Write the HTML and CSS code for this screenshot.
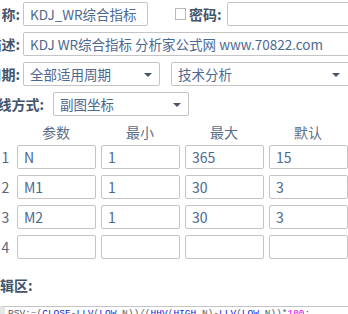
FILE: index.html
```html
<!DOCTYPE html>
<html lang="zh-CN">
<head>
  <meta charset="UTF-8">
  <title>公式编辑</title>
  <link rel="stylesheet" href="styles.css">
</head>
<body>
  <div class="form">
    <div class="row">
      <label class="label">名称:</label>
      <div class="field name">KDJ_WR综合指标</div>
      <span class="check"></span>
      <label class="label-inline">密码:</label>
      <div class="field pass"></div>
    </div>
    <div class="row">
      <label class="label">描述:</label>
      <div class="field desc">KDJ WR综合指标 分析家公式网 www.70822.com</div>
    </div>
    <div class="row">
      <label class="label">周期:</label>
      <div class="field select period">全部适用周期<span class="arrow"></span></div>
      <div class="field select kind">技术分析<span class="arrow"></span></div>
    </div>
    <div class="row">
      <label class="label wide">画线方式:</label>
      <div class="field select axis">副图坐标<span class="arrow"></span></div>
    </div>
  </div>

  <div class="params">
    <span></span>
    <span class="head">参数</span>
    <span class="head">最小</span>
    <span class="head">最大</span>
    <span class="head">默认</span>

    <span class="num">1</span>
    <div class="field">N</div>
    <div class="field">1</div>
    <div class="field">365</div>
    <div class="field">15</div>

    <span class="num">2</span>
    <div class="field">M1</div>
    <div class="field">1</div>
    <div class="field">30</div>
    <div class="field">3</div>

    <span class="num">3</span>
    <div class="field">M2</div>
    <div class="field">1</div>
    <div class="field">30</div>
    <div class="field">3</div>

    <span class="num">4</span>
    <div class="field"></div>
    <div class="field"></div>
    <div class="field"></div>
    <div class="field"></div>
  </div>

  <div class="editor-label">编辑区:</div>
  <div class="code">
    <div class="line"><span class="p">RSV:=(</span><span class="k">CLOSE</span><span class="p">-</span><span class="k">LLV</span><span class="p">(</span><span class="k">LOW</span><span class="p">,N))/(</span><span class="k">HHV</span><span class="p">(</span><span class="k">HIGH</span><span class="p">,N)-</span><span class="k">LLV</span><span class="p">(</span><span class="k">LOW</span><span class="p">,N))*</span><span class="n">100</span><span class="p">;</span></div>
  </div>
</body>
</html>
```

FILE: styles.css
```css
* {
  box-sizing: border-box;
}

body {
  margin: 0;
  width: 348px;
  height: 314px;
  overflow: hidden;
  background: #ffffff;
  font-family: "Noto Sans CJK SC", "Noto Sans", sans-serif;
  font-size: 13.5px;
  color: #46566b;
}

/* Top form */
.form {
  margin-left: -30px;
  padding-top: 2px;
  width: 420px;
}

.row {
  display: flex;
  align-items: center;
  height: 24px;
  margin-bottom: 6px;
}

.label {
  width: 50px;
  text-align: right;
  margin-right: 3px;
  font-size: 14px;
  font-weight: bold;
  color: #44546a;
  white-space: nowrap;
}

.label.wide {
  width: 74px;
  margin-right: 9px;
}

.label-inline {
  font-size: 14px;
  font-weight: bold;
  color: #44546a;
  margin-left: 3px;
  margin-right: 5px;
  white-space: nowrap;
}

.field {
  position: relative;
  height: 24px;
  line-height: 22px;
  border: 1px solid #c4c4c4;
  border-radius: 2px;
  padding: 0 6px;
  color: #4d6890;
  white-space: nowrap;
  overflow: hidden;
}

.name { width: 125px; }
.pass { width: 150px; }
.desc { width: 360px; }
.period { width: 137px; margin-right: 11px; }
.kind { width: 200px; }
.axis { width: 136px; }

.select .arrow {
  position: absolute;
  right: 7px;
  top: 10px;
  border-left: 4px solid transparent;
  border-right: 4px solid transparent;
  border-top: 4px solid #4a5568;
}

.kind .arrow {
  right: 30px;
}

.check {
  display: inline-block;
  width: 11px;
  height: 12px;
  border: 1px solid #b8b8b8;
  margin-left: 27px;
}

/* Parameter table */
.params {
  display: grid;
  grid-template-columns: 11px repeat(4, 78px);
  grid-template-rows: 17px;
  grid-auto-rows: 24px;
  column-gap: 6px;
  row-gap: 6px;
}

.head {
  text-align: center;
  color: #5d6f88;
  font-size: 14px;
  line-height: 20px;
  height: 20px;
}

.num {
  text-align: center;
  line-height: 24px;
  font-size: 14px;
  color: #5a6678;
}

.params .field {
  width: 79px;
  font-size: 14px;
}

/* Editor */
.editor-label {
  margin-top: 16px;
  margin-left: -14px;
  font-size: 14px;
  font-weight: bold;
  color: #44546a;
  line-height: 20px;
}

.code {
  margin-top: 11px;
  border-top: 1px solid #c4c4c4;
  border-left: 5px solid #e6e6e6;
  padding-left: 3px;
  font-family: "Liberation Mono", monospace;
  font-size: 9.5px;
  line-height: 14px;
}

.code .p { color: #555b66; }
.code .k { color: #1c1ce0; }
.code .n { color: #ee00ee; }
```
